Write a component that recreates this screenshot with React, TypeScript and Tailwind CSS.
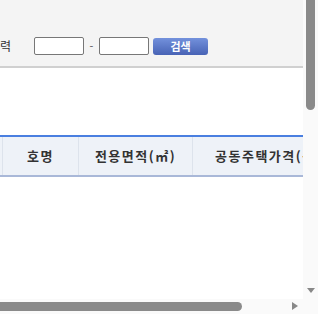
export default function App() {
  return (
    <div
      className="w-[318px] h-[314px] flex flex-col bg-white overflow-hidden"
      style={{ fontFamily: '"Noto Sans CJK KR", "Noto Sans", sans-serif' }}
    >
      <div className="flex h-[299px]">
        {/* main content */}
        <div className="w-[303px] flex flex-col">
          <div className="h-[68px] bg-[#f4f4f4] border-b-2 border-[#d0d0d0] pt-[37px]">
            <div className="flex items-center h-[18px]">
              <span className="text-[12px] text-[#333] leading-none w-[34px]">력</span>
              <input className="w-[50px] h-[18px] bg-white border border-[#777] rounded-[2px]" />
              <span className="w-[15px] text-center text-[11px] text-[#555] leading-none pb-[2px]">-</span>
              <input className="w-[50px] h-[18px] bg-white border border-[#777] rounded-[2px]" />
              <button className="ml-[4px] w-[55px] h-[17px] rounded-[3px] bg-gradient-to-b from-[#7391dc] to-[#4863b5] text-white text-[11px] font-semibold leading-none flex items-center justify-center">
                검색
              </button>
            </div>
          </div>
          <div className="h-[67px]" />
          <div className="border-t-2 border-[#4a7fe0] border-b-2 border-b-[#a9b8d8] bg-[#eef2f8] h-[42px] flex overflow-hidden">
            <div className="w-[3px] border-r border-[#dde3ec] shrink-0" />
            <div className="w-[76px] border-r border-[#dde3ec] shrink-0 flex items-center justify-center text-[13px] font-bold text-[#333] tracking-[1.5px]">
              호명
            </div>
            <div className="w-[114px] border-r border-[#dde3ec] shrink-0 flex items-center justify-center text-[13px] font-bold text-[#333] tracking-[1.5px]">
              전용면적(㎡)
            </div>
            <div className="shrink-0 flex items-center pl-[22px] text-[13px] font-bold text-[#333] tracking-[1.5px] whitespace-nowrap">
              공동주택가격(원)
            </div>
          </div>
          <div className="flex-1" />
        </div>
        {/* vertical scrollbar */}
        <div className="w-[15px] bg-[#fafafa] relative">
          <div className="ml-[3px] w-[9px] h-[110px] bg-[#8a8a8a] rounded-b-full" />
          <div className="absolute left-[4px] top-[288px] w-0 h-0 border-l-[4px] border-r-[4px] border-t-[5px] border-l-transparent border-r-transparent border-t-[#888]" />
        </div>
      </div>
      <div className="flex h-[15px]">
        <div className="w-[303px] bg-[#fafafa] relative">
          <div className="mt-[3px] w-[242px] h-[9px] bg-[#8a8a8a] rounded-r-full" />
          <div className="absolute left-[292px] top-[3px] w-0 h-0 border-t-[4px] border-b-[4px] border-l-[6px] border-t-transparent border-b-transparent border-l-[#888]" />
        </div>
        <div className="w-[15px] bg-[#fafafa]" />
      </div>
    </div>
  );
}
